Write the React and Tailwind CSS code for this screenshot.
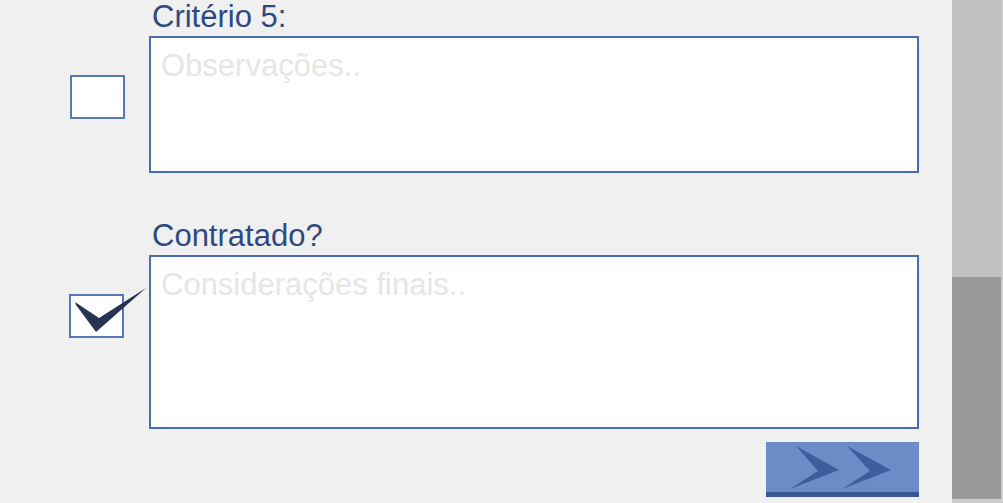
import React from "react";

const font = "font-['Liberation_Sans',Arial,sans-serif]";

const CheckBox = ({ checked, className = "" }) => (
  <div className={`relative w-[55px] h-[44px] border-2 border-[#5677b8] bg-white ${className}`}>
    {checked && (
      <svg
        className="absolute left-[-2px] top-[-8px] overflow-visible"
        width="80"
        height="46"
        viewBox="0 0 80 46"
      >
        <polygon points="6,14 30,30 77,0 27,44 7,17" fill="#263352" />
      </svg>
    )}
  </div>
);

const Section = ({ title, placeholder, height, checked, boxClass }) => (
  <div className="flex">
    <div className="w-[80px] pt-[75px]">
      <CheckBox checked={checked} className={boxClass} />
    </div>
    <div className="flex flex-col">
      <div className={`h-[36px] pl-[3px] leading-[33px] text-[31px] text-[#2d4a80] ${font}`}>
        {title}
      </div>
      <textarea
        readOnly
        placeholder={placeholder}
        className={`w-[770px] ${height} resize-none border-2 border-[#4a6cb0] bg-white pl-[10px] pt-[10px] text-[31px] leading-[36px] outline-none placeholder:text-[#e6e6e6] ${font}`}
      />
    </div>
  </div>
);

const NextButton = () => (
  <button className="w-[153px] h-[55px] flex flex-col bg-[#6d8cc7]">
    <svg width="153" height="50" viewBox="0 0 153 50">
      <polygon points="30,4 73,28 24,47 52,29" fill="#3e5d9c" />
      <polygon points="81,4 125,28 76,47 104,29" fill="#3e5d9c" />
    </svg>
    <div className="h-[5px] w-full bg-[#3a5894]" />
  </button>
);

export default function App() {
  return (
    <div className="w-[1003px] h-[503px] flex overflow-hidden bg-[#f0f0f0]">
      <div className="w-[952px] h-full pl-[69px]">
        <Section
          title="Critério 5:"
          placeholder="Observações.."
          height="h-[137px]"
          boxClass="ml-px"
        />
        <div className="h-[46px]" />
        <Section
          title="Contratado?"
          placeholder="Considerações finais.."
          height="h-[174px]"
          checked
        />
        <div className="flex justify-end w-[850px] pt-[13px]">
          <NextButton />
        </div>
      </div>
      <div className="w-[51px] h-full flex flex-col">
        <div className="h-[277px] flex">
          <div className="w-[49px] bg-[#c1c1c2]" />
          <div className="flex-1 bg-[#cbcbcb]" />
        </div>
        <div className="h-[222px] flex">
          <div className="w-[49px] bg-[#999a9b]" />
          <div className="flex-1 bg-[#cbcbcb]" />
        </div>
        <div className="flex-1 bg-[#cdcdcd]" />
      </div>
    </div>
  );
}
